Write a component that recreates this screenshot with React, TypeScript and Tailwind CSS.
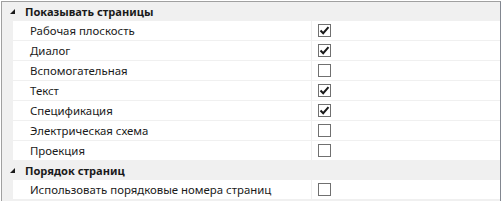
import React from 'react';

type Row = { label: string; checked: boolean };

const groups: { title: string; rows: Row[] }[] = [
  {
    title: 'Показывать страницы',
    rows: [
      { label: 'Рабочая плоскость', checked: true },
      { label: 'Диалог', checked: true },
      { label: 'Вспомогательная', checked: false },
      { label: 'Текст', checked: true },
      { label: 'Спецификация', checked: true },
      { label: 'Электрическая схема', checked: false },
      { label: 'Проекция', checked: false },
    ],
  },
  {
    title: 'Порядок страниц',
    rows: [{ label: 'Использовать порядковые номера страниц', checked: false }],
  },
];

function Check({ checked }: { checked: boolean }) {
  return (
    <div className="w-[13px] h-[13px] border border-[#707070] bg-white flex items-center justify-center">
      {checked && (
        <svg width="11" height="11" viewBox="0 0 11 11">
          <path d="M1.5 5.5 L4.2 8.2 L9.5 2.2" fill="none" stroke="#1a1a1a" strokeWidth="2" />
        </svg>
      )}
    </div>
  );
}

export default function App() {
  return (
    <div
      className="w-[504px] h-[201px] bg-white pt-[1px] pl-[1px] pr-[3px] text-[11.4px] text-[#1a1a1a]"
      style={{ fontFamily: '"Noto Sans", "Open Sans", sans-serif' }}
    >
      <div className="h-full border-t border-l border-[#a0a0a0] border-r border-r-[#828790] bg-[#f0f0f0]">
        {groups.map((g) => (
          <div key={g.title}>
            <div className="h-[19px] flex items-center">
              <div className="w-[22px] flex justify-end pr-[9px]">
                <svg width="5" height="5" viewBox="0 0 5 5">
                  <path d="M5 0 L5 5 L0 5 Z" fill="#1a1a1a" />
                </svg>
              </div>
              <span className="font-bold leading-none text-[11.1px] pl-[1px]">{g.title}</span>
            </div>
            {g.rows.map((r) => (
              <div key={r.label} className="h-[20px] flex pl-[11px]">
                <div className="flex-1 flex bg-white border-b border-[#f0f0f0]">
                  <div className="w-[298px] flex items-center pl-[17px] leading-none">{r.label}</div>
                  <div className="flex-1 flex items-center pl-[6px] border-l border-[#f0f0f0]">
                    <Check checked={r.checked} />
                  </div>
                </div>
              </div>
            ))}
          </div>
        ))}
      </div>
    </div>
  );
}
